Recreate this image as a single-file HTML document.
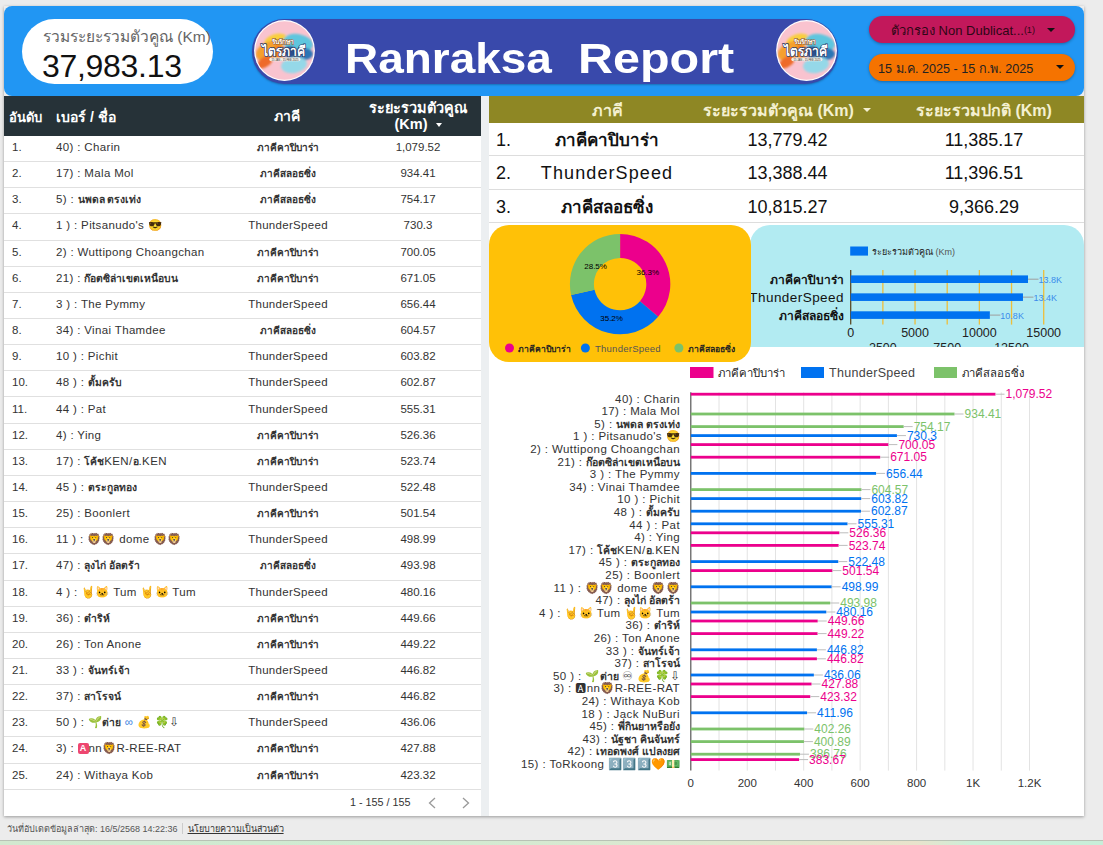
<!DOCTYPE html>
<html><head><meta charset="utf-8">
<style>
*{margin:0;padding:0;box-sizing:border-box}
html,body{width:1103px;height:845px;overflow:hidden;background:#ececec;font-family:"Liberation Sans", sans-serif;}
.abs{position:absolute}
#hdr{position:absolute;left:4px;top:6px;width:1080px;height:90px;background:#2196F3;border-radius:8px}
#cvbg{position:absolute;left:4px;top:6px;width:1080px;height:90px;background:#ececec}
#pill{position:absolute;left:22px;top:19px;width:191px;height:65px;background:#fff;border-radius:33px}
#pill .lab{position:absolute;left:21px;top:5px;font-size:15.5px;color:#666;white-space:nowrap}
#pill .val{position:absolute;left:20px;top:29px;font-size:32px;color:#111;white-space:nowrap;letter-spacing:-0.3px}
#banner{position:absolute;left:251.6px;top:19px;width:586.4px;height:65px;background:#3949AB;border-radius:32.5px;box-shadow:0 1px 2px rgba(0,0,0,.25)}
.title{position:absolute;top:34px;font-size:43px;font-weight:bold;color:#fff;white-space:nowrap;transform-origin:0 0}
.logo{position:absolute;width:64px;height:64px;border-radius:50%;background:#3949AB;box-shadow:0 1px 3px rgba(0,0,0,.35)}
.logo .in{position:absolute;left:3px;top:3px;width:58px;height:58px;border-radius:50%;background:#f9c6d0;overflow:hidden}
.fpill{position:absolute;left:869px;width:206px;height:27px;border-radius:14px;box-shadow:0 1px 3px rgba(0,0,0,.3);white-space:nowrap}
.fpill .t{position:absolute;top:6px;font-size:13px;color:#222}
.caret{position:absolute;width:0;height:0;border-left:4px solid transparent;border-right:4px solid transparent;border-top:4px solid #111}
#canvas{position:absolute;left:4px;top:6px;width:1080px;height:810px;background:#fff;box-shadow:0 1px 3px rgba(0,0,0,.35)}
#left{position:absolute;left:4px;top:96px;width:477px;height:720px;background:#fff}
#lhead{position:absolute;left:4px;top:96px;width:477px;height:40px;background:#263238;color:#fff;font-weight:bold}
.tr{position:absolute;left:4px;width:477px;height:26.15px;border-bottom:1px solid #e0e0e0;font-size:11.5px;color:#333;white-space:nowrap}
.tr span{position:absolute;top:0;line-height:23px}
.c1{left:8px} .c2{left:52px;letter-spacing:0.35px} .c2 b{letter-spacing:0;font-size:10.3px} .c3{left:284px;width:0;display:flex;justify-content:center} .c4{left:414px;width:0;display:flex;justify-content:center}
.th{font-weight:bold;font-size:10px} .ea{display:inline-block;font-style:normal;background:#ee4670;color:#fff;font-size:9px;line-height:11px;width:11px;text-align:center;border-radius:2px;vertical-align:1px;font-weight:bold;letter-spacing:0} .c3{letter-spacing:0.3px} .c3.th{letter-spacing:0}
#gap{position:absolute;left:481px;top:96px;width:8px;height:720px;background:#eceff1}
#right{position:absolute;left:489px;top:96px;width:595px;height:720px;background:#fff}
#rhead{position:absolute;left:489px;top:96px;width:595px;height:27px;background:#8E8724;color:#f4f0d0;font-weight:bold;font-size:16px}
.rr{position:absolute;left:489px;width:595px;height:33.3px;border-bottom:1px solid #ddd;font-size:18px;color:#111;white-space:nowrap}
.rr span{position:absolute;top:0;line-height:35px} .rr .cc{width:0;display:flex;justify-content:center}
#yellow{position:absolute;left:489px;top:225px;width:262px;height:137px;background:#FFC107;border-radius:20px}
#cyan{position:absolute;left:750px;top:225px;width:334px;height:122px;background:#B2EBF2;border-radius:20px 20px 0 0;overflow:hidden}
#foot{position:absolute;left:7px;top:823px;font-size:9px;line-height:12px;color:#555;white-space:nowrap}
#strip{position:absolute;left:0;top:840px;width:1103px;height:5px;background:linear-gradient(90deg,#d2e8cf 0%,#cfebd2 35%,#dbe8d0 60%,#e9e3cc 83%,#cdeed8 88%,#c8eed9 100%);border-top:1px solid #b9c2b5}
svg text{font-family:"Liberation Sans", sans-serif}
</style></head><body>
<div id="canvas"></div><div id="cvbg"></div><div id="hdr"></div>
<div id="pill"><div class="lab">รวมระยะรวมตัวคูณ (Km)</div><div class="val">37,983.13</div></div>
<div id="banner"></div>
<svg class="abs" style="left:252.0px;top:18.3px" width="65" height="65" viewBox="0 0 65 65">
<defs><clipPath id="c284"><circle cx="32.5" cy="32.5" r="29.2"/></clipPath>
<filter id="f284" x="-20%" y="-20%" width="140%" height="140%"><feGaussianBlur stdDeviation="0.8"/></filter></defs>
<circle cx="32.5" cy="32.5" r="30.4" fill="#fff"/>
<circle cx="32.5" cy="32.5" r="29.2" fill="#F9C3CF"/>
<g clip-path="url(#c284)"><g filter="url(#f284)">
<ellipse cx="24" cy="23" rx="12" ry="7" fill="#F9CF3C" transform="rotate(-15 24 23)"/>
<ellipse cx="17" cy="33" rx="14" ry="9" fill="#F5A02E" transform="rotate(-25 17 33)"/>
<ellipse cx="13" cy="44" rx="9" ry="5" fill="#EE6A2A" transform="rotate(-35 13 44)"/>
<ellipse cx="27" cy="34" rx="7" ry="7" fill="#F07F22"/>
<ellipse cx="46" cy="25" rx="15" ry="9" fill="#5EC6DE" transform="rotate(10 46 25)"/>
<ellipse cx="52" cy="36" rx="9" ry="6" fill="#2B75B5"/>
<ellipse cx="42" cy="47" rx="13" ry="8" fill="#95D8E8" transform="rotate(-10 42 47)"/>
<ellipse cx="38" cy="34" rx="7" ry="6" fill="#2A4F8E"/>
</g></g>
<text x="31" y="26" text-anchor="middle" font-size="6.5" font-weight="bold" fill="#fff" stroke="#8a4a10" stroke-width="1" paint-order="stroke">รันรักษา</text>
<text x="31.5" y="38.2" text-anchor="middle" font-size="13.5" font-weight="bold" fill="#fff" stroke="#23345e" stroke-width="1.4" paint-order="stroke" textLength="44" lengthAdjust="spacingAndGlyphs">ไตรภาคี</text>
<rect x="17.3" y="39.6" width="31.2" height="3.6" rx="1.8" fill="#f2ede6"/>
<text x="32.9" y="42.5" text-anchor="middle" font-size="3" fill="#333" textLength="27" lengthAdjust="spacingAndGlyphs">15 JAN - 15 FEB 2025</text>
</svg>
<svg class="abs" style="left:774.0px;top:17.7px" width="65" height="65" viewBox="0 0 65 65">
<defs><clipPath id="c806"><circle cx="32.5" cy="32.5" r="29.2"/></clipPath>
<filter id="f806" x="-20%" y="-20%" width="140%" height="140%"><feGaussianBlur stdDeviation="0.8"/></filter></defs>
<circle cx="32.5" cy="32.5" r="30.4" fill="#fff"/>
<circle cx="32.5" cy="32.5" r="29.2" fill="#F9C3CF"/>
<g clip-path="url(#c806)"><g filter="url(#f806)">
<ellipse cx="24" cy="23" rx="12" ry="7" fill="#F9CF3C" transform="rotate(-15 24 23)"/>
<ellipse cx="17" cy="33" rx="14" ry="9" fill="#F5A02E" transform="rotate(-25 17 33)"/>
<ellipse cx="13" cy="44" rx="9" ry="5" fill="#EE6A2A" transform="rotate(-35 13 44)"/>
<ellipse cx="27" cy="34" rx="7" ry="7" fill="#F07F22"/>
<ellipse cx="46" cy="25" rx="15" ry="9" fill="#5EC6DE" transform="rotate(10 46 25)"/>
<ellipse cx="52" cy="36" rx="9" ry="6" fill="#2B75B5"/>
<ellipse cx="42" cy="47" rx="13" ry="8" fill="#95D8E8" transform="rotate(-10 42 47)"/>
<ellipse cx="38" cy="34" rx="7" ry="6" fill="#2A4F8E"/>
</g></g>
<text x="31" y="26" text-anchor="middle" font-size="6.5" font-weight="bold" fill="#fff" stroke="#8a4a10" stroke-width="1" paint-order="stroke">รันรักษา</text>
<text x="31.5" y="38.2" text-anchor="middle" font-size="13.5" font-weight="bold" fill="#fff" stroke="#23345e" stroke-width="1.4" paint-order="stroke" textLength="44" lengthAdjust="spacingAndGlyphs">ไตรภาคี</text>
<rect x="17.3" y="39.6" width="31.2" height="3.6" rx="1.8" fill="#f2ede6"/>
<text x="32.9" y="42.5" text-anchor="middle" font-size="3" fill="#333" textLength="27" lengthAdjust="spacingAndGlyphs">15 JAN - 15 FEB 2025</text>
</svg>
<div class="title" style="left:344.6px;transform:scaleX(1.068)">Ranraksa</div>
<div class="title" style="left:577.6px;transform:scaleX(1.127)">Report</div>
<div class="fpill" style="top:16px;background:#C2185B"><span class="t" style="left:22px;top:4px;color:#2e0716">ตัวกรอง Non Dublicat...<span style="font-size:9px;vertical-align:2px">(1)</span></span><div class="caret" style="left:178px;top:12px"></div></div>
<div class="fpill" style="top:54px;background:#F57300"><span class="t" style="left:9px;top:4.5px;font-size:12.6px">15 ม.ค. 2025 - 15 ก.พ. 2025</span><div class="caret" style="left:187px;top:11px"></div></div>

<div id="left"></div>
<div id="lhead">
 <span class="abs" style="left:5px;top:11px;font-size:13px">อันดับ</span>
 <span class="abs" style="left:52px;top:10px;font-size:14px">เบอร์ / ชื่อ</span>
 <span class="abs" style="left:270px;top:9px;font-size:14px">ภาคี</span>
 <span class="abs" style="left:359px;top:4px;font-size:14.5px;text-align:center;width:110px;line-height:16px">ระยะรวมตัวคูณ<br>(Km) <span style="display:inline-block;width:0;height:0;border-left:3.5px solid transparent;border-right:3.5px solid transparent;border-top:4px solid #fff;vertical-align:2px;margin-left:4px"></span></span>
</div>
<div class="tr" style="top:136.00px"><span class="c1">1.</span><span class="c2">40) : Charin</span><span class="c3 th">ภาคีคาปิบาร่า</span><span class="c4">1,079.52</span></div>
<div class="tr" style="top:162.15px"><span class="c1">2.</span><span class="c2">17) : Mala Mol</span><span class="c3 th">ภาคีสลอธซิ่ง</span><span class="c4">934.41</span></div>
<div class="tr" style="top:188.30px"><span class="c1">3.</span><span class="c2">5) : <b>นพดล ตรงเท่ง</b></span><span class="c3 th">ภาคีสลอธซิ่ง</span><span class="c4">754.17</span></div>
<div class="tr" style="top:214.45px"><span class="c1">4.</span><span class="c2">1 ) : Pitsanudo&#39;s 😎</span><span class="c3">ThunderSpeed</span><span class="c4">730.3</span></div>
<div class="tr" style="top:240.60px"><span class="c1">5.</span><span class="c2">2) : Wuttipong Choangchan</span><span class="c3 th">ภาคีคาปิบาร่า</span><span class="c4">700.05</span></div>
<div class="tr" style="top:266.75px"><span class="c1">6.</span><span class="c2">21) : <b>ก๊อตซิล่าเขตเหนือบน</b></span><span class="c3 th">ภาคีคาปิบาร่า</span><span class="c4">671.05</span></div>
<div class="tr" style="top:292.90px"><span class="c1">7.</span><span class="c2">3 ) : The Pymmy</span><span class="c3">ThunderSpeed</span><span class="c4">656.44</span></div>
<div class="tr" style="top:319.05px"><span class="c1">8.</span><span class="c2">34) : Vinai Thamdee</span><span class="c3 th">ภาคีสลอธซิ่ง</span><span class="c4">604.57</span></div>
<div class="tr" style="top:345.20px"><span class="c1">9.</span><span class="c2">10 ) : Pichit</span><span class="c3">ThunderSpeed</span><span class="c4">603.82</span></div>
<div class="tr" style="top:371.35px"><span class="c1">10.</span><span class="c2">48 ) : <b>ตั้มครับ</b></span><span class="c3">ThunderSpeed</span><span class="c4">602.87</span></div>
<div class="tr" style="top:397.50px"><span class="c1">11.</span><span class="c2">44 ) : Pat</span><span class="c3">ThunderSpeed</span><span class="c4">555.31</span></div>
<div class="tr" style="top:423.65px"><span class="c1">12.</span><span class="c2">4) : Ying</span><span class="c3 th">ภาคีคาปิบาร่า</span><span class="c4">526.36</span></div>
<div class="tr" style="top:449.80px"><span class="c1">13.</span><span class="c2">17) : <b>โค้ช</b>KEN/<b>อ</b>.KEN</span><span class="c3 th">ภาคีคาปิบาร่า</span><span class="c4">523.74</span></div>
<div class="tr" style="top:475.95px"><span class="c1">14.</span><span class="c2">45 ) : <b>ตระกูลทอง</b></span><span class="c3">ThunderSpeed</span><span class="c4">522.48</span></div>
<div class="tr" style="top:502.10px"><span class="c1">15.</span><span class="c2">25) : Boonlert</span><span class="c3 th">ภาคีคาปิบาร่า</span><span class="c4">501.54</span></div>
<div class="tr" style="top:528.25px"><span class="c1">16.</span><span class="c2">11 ) : 🦁🦁 dome 🦁🦁</span><span class="c3">ThunderSpeed</span><span class="c4">498.99</span></div>
<div class="tr" style="top:554.40px"><span class="c1">17.</span><span class="c2">47) : <b>ลุงไก่ อัลตร้า</b></span><span class="c3 th">ภาคีสลอธซิ่ง</span><span class="c4">493.98</span></div>
<div class="tr" style="top:580.55px"><span class="c1">18.</span><span class="c2">4 ) : 🤘🐱 Tum 🤘🐱 Tum</span><span class="c3">ThunderSpeed</span><span class="c4">480.16</span></div>
<div class="tr" style="top:606.70px"><span class="c1">19.</span><span class="c2">36) : <b>ต๋าริห์</b></span><span class="c3 th">ภาคีคาปิบาร่า</span><span class="c4">449.66</span></div>
<div class="tr" style="top:632.85px"><span class="c1">20.</span><span class="c2">26) : Ton Anone</span><span class="c3 th">ภาคีคาปิบาร่า</span><span class="c4">449.22</span></div>
<div class="tr" style="top:659.00px"><span class="c1">21.</span><span class="c2">33 ) : <b>จันทร์เจ้า</b></span><span class="c3">ThunderSpeed</span><span class="c4">446.82</span></div>
<div class="tr" style="top:685.15px"><span class="c1">22.</span><span class="c2">37) : <b>สาโรจน์</b></span><span class="c3 th">ภาคีคาปิบาร่า</span><span class="c4">446.82</span></div>
<div class="tr" style="top:711.30px"><span class="c1">23.</span><span class="c2">50 ) : 🌱<b>ต่าย</b> <i style="font-style:normal;color:#3b82e0">∞</i> 💰 🍀⇩</span><span class="c3">ThunderSpeed</span><span class="c4">436.06</span></div>
<div class="tr" style="top:737.45px"><span class="c1">24.</span><span class="c2">3) : <i class="ea">A</i>nn🦁R-REE-RAT</span><span class="c3 th">ภาคีคาปิบาร่า</span><span class="c4">427.88</span></div>
<div class="tr" style="top:763.60px"><span class="c1">25.</span><span class="c2">24) : Withaya Kob</span><span class="c3 th">ภาคีคาปิบาร่า</span><span class="c4">423.32</span></div>
<div class="abs" style="left:350px;top:796px;font-size:10.8px;color:#333">1 - 155 / 155</div>
<svg class="abs" style="left:420px;top:790px" width="60" height="26"><path d="M15,8 L9.5,13 L15,18" stroke="#999" stroke-width="1.3" fill="none"/><path d="M43,8 L48.5,13 L43,18" stroke="#999" stroke-width="1.3" fill="none"/></svg>
<div id="gap"></div>
<div id="right"></div>
<div id="rhead">
 <span class="abs" style="left:103px;top:2px">ภาคี</span>
 <span class="abs" style="left:214px;top:2px">ระยะรวมตัวคูณ (Km) <span style="display:inline-block;width:0;height:0;border-left:4px solid transparent;border-right:4px solid transparent;border-top:4.5px solid #f4f0d0;vertical-align:4px;margin-left:5px"></span></span>
 <span class="abs" style="left:427px;top:2px">ระยะรวมปกติ (Km)</span>
</div>
<div class="rr" style="top:123px"><span style="left:7px">1.</span><span class="cc" style="left:118px;font-weight:bold;font-size:17px">ภาคีคาปิบาร่า</span><span class="cc" style="left:298.5px">13,779.42</span><span class="cc" style="left:495px">11,385.17</span></div>
<div class="rr" style="top:156.3px"><span style="left:7px">2.</span><span class="cc" style="left:118px;letter-spacing:1.1px">ThunderSpeed</span><span class="cc" style="left:298.5px">13,388.44</span><span class="cc" style="left:495px">11,396.51</span></div>
<div class="rr" style="top:189.6px"><span style="left:7px">3.</span><span class="cc" style="left:118px;font-weight:bold;font-size:17px">ภาคีสลอธซิ่ง</span><span class="cc" style="left:298.5px">10,815.27</span><span class="cc" style="left:495px">9,366.29</span></div>

<div id="cyan"></div>
<svg class="abs" style="left:700px;top:225px" width="384" height="122" viewBox="700 225 384 122">
<rect x="850.2" y="246.5" width="17.8" height="9.1" fill="#0072F0"/>
<text x="872" y="254.5" font-size="9" fill="#222">ระยะรวมตัวคูณ <tspan fill="#555">(Km)</tspan></text>
<line x1="882.87" y1="270" x2="882.87" y2="324.6" stroke="#EDBE3A" stroke-width="1.3"/>
<line x1="915.04" y1="270" x2="915.04" y2="324.6" stroke="#EDBE3A" stroke-width="1.3"/>
<line x1="947.20" y1="270" x2="947.20" y2="324.6" stroke="#EDBE3A" stroke-width="1.3"/>
<line x1="979.37" y1="270" x2="979.37" y2="324.6" stroke="#EDBE3A" stroke-width="1.3"/>
<line x1="1011.54" y1="270" x2="1011.54" y2="324.6" stroke="#EDBE3A" stroke-width="1.3"/>
<line x1="1043.71" y1="270" x2="1043.71" y2="324.6" stroke="#EDBE3A" stroke-width="1.3"/>
<line x1="850.7" y1="270" x2="850.7" y2="324.6" stroke="#5a4a25" stroke-width="1.3"/>
<rect x="850.7" y="275.40" width="177.30" height="7.6" fill="#0072F0"/>
<line x1="1028.00" y1="279.20" x2="1038.50" y2="279.20" stroke="#9e9e9e" stroke-width="1"/>
<text x="1038.50" y="282.60" font-size="9" fill="#3B8BEB">13.8K</text>
<text x="844" y="283.90" text-anchor="end" fill="#111" font-weight="bold" font-size="12">ภาคีคาปิบาร่า</text>
<rect x="850.7" y="293.35" width="172.27" height="7.6" fill="#0072F0"/>
<line x1="1022.97" y1="297.15" x2="1033.47" y2="297.15" stroke="#9e9e9e" stroke-width="1"/>
<text x="1033.47" y="300.55" font-size="9" fill="#3B8BEB">13.4K</text>
<text x="844" y="301.85" text-anchor="end" fill="#111" font-size="13.5" letter-spacing="0.45">ThunderSpeed</text>
<rect x="850.7" y="311.30" width="139.16" height="7.6" fill="#0072F0"/>
<line x1="989.86" y1="315.10" x2="1000.36" y2="315.10" stroke="#9e9e9e" stroke-width="1"/>
<text x="1000.36" y="318.50" font-size="9" fill="#3B8BEB">10.8K</text>
<text x="844" y="319.80" text-anchor="end" fill="#111" font-weight="bold" font-size="12">ภาคีสลอธซิ่ง</text>
<text x="850.70" y="337.2" text-anchor="middle" font-size="12.5" fill="#222">0</text>
<text x="915.04" y="337.2" text-anchor="middle" font-size="12.5" fill="#222">5000</text>
<text x="979.37" y="337.2" text-anchor="middle" font-size="12.5" fill="#222">10000</text>
<text x="1043.71" y="337.2" text-anchor="middle" font-size="12.5" fill="#222">15000</text>
<text x="882.87" y="351.5" text-anchor="middle" font-size="12.5" fill="#222">2500</text>
<text x="947.20" y="351.5" text-anchor="middle" font-size="12.5" fill="#222">7500</text>
<text x="1011.54" y="351.5" text-anchor="middle" font-size="12.5" fill="#222">12500</text>
</svg>
<div id="yellow"></div>
<svg class="abs" style="left:0;top:0" width="1103" height="845" viewBox="0 0 1103 845">
<path d="M620.10,233.90 A50.2,50.2 0 0 1 658.17,316.82 L639.97,301.18 A26.2,26.2 0 0 0 620.10,257.90 Z" fill="#EC008C"/>
<path d="M658.17,316.82 A50.2,50.2 0 0 1 571.11,295.05 L594.53,289.82 A26.2,26.2 0 0 0 639.97,301.18 Z" fill="#0072F0"/>
<path d="M571.11,295.05 A50.2,50.2 0 0 1 620.10,233.90 L620.10,257.90 A26.2,26.2 0 0 0 594.53,289.82 Z" fill="#7CC26A"/>
<text x="595.6" y="268.5" text-anchor="middle" font-size="8" fill="#000">28.5%</text>
<text x="647.8" y="274.5" text-anchor="middle" font-size="8" fill="#000">36.3%</text>
<text x="611.6" y="321" text-anchor="middle" font-size="8" fill="#000">35.2%</text>
<circle cx="509.5" cy="348" r="4.5" fill="#EC008C"/><text x="518" y="351.5" font-size="8.6" font-weight="bold" fill="#222">ภาคีคาปิบาร่า</text>
<circle cx="585.4" cy="348" r="4.5" fill="#0072F0"/><text x="595" y="351.5" font-size="9.5" letter-spacing="0.25" fill="#555">ThunderSpeed</text>
<circle cx="678.9" cy="348" r="4.5" fill="#7CC26A"/><text x="688" y="351.5" font-size="8.6" font-weight="bold" fill="#222">ภาคีสลอธซิ่ง</text>
<line x1="719.02" y1="392.3" x2="719.02" y2="770.6" stroke="#e3e3e3" stroke-width="1"/>
<line x1="747.25" y1="392.3" x2="747.25" y2="770.6" stroke="#e3e3e3" stroke-width="1"/>
<line x1="775.47" y1="392.3" x2="775.47" y2="770.6" stroke="#e3e3e3" stroke-width="1"/>
<line x1="803.70" y1="392.3" x2="803.70" y2="770.6" stroke="#e3e3e3" stroke-width="1"/>
<line x1="831.92" y1="392.3" x2="831.92" y2="770.6" stroke="#e3e3e3" stroke-width="1"/>
<line x1="860.15" y1="392.3" x2="860.15" y2="770.6" stroke="#e3e3e3" stroke-width="1"/>
<line x1="888.38" y1="392.3" x2="888.38" y2="770.6" stroke="#e3e3e3" stroke-width="1"/>
<line x1="916.60" y1="392.3" x2="916.60" y2="770.6" stroke="#e3e3e3" stroke-width="1"/>
<line x1="944.82" y1="392.3" x2="944.82" y2="770.6" stroke="#e3e3e3" stroke-width="1"/>
<line x1="973.05" y1="392.3" x2="973.05" y2="770.6" stroke="#e3e3e3" stroke-width="1"/>
<line x1="1001.27" y1="392.3" x2="1001.27" y2="770.6" stroke="#e3e3e3" stroke-width="1"/>
<line x1="1029.50" y1="392.3" x2="1029.50" y2="770.6" stroke="#e3e3e3" stroke-width="1"/>
<line x1="690.8" y1="392.3" x2="690.8" y2="770.6" stroke="#555" stroke-width="1.2"/>
<rect x="690.8" y="392.80" width="304.69" height="2.8" fill="#EC008C"/>
<line x1="995.49" y1="394.20" x2="1004.49" y2="394.20" stroke="#bdbdbd" stroke-width="1"/>
<text x="1005.49" y="398.40" fill="#EC008C" font-size="12">1,079.52</text>
<text x="680" y="402.60" text-anchor="end" fill="#333" font-size="11.5" letter-spacing="0.4">40) : Charin</text>
<rect x="690.8" y="412.60" width="263.74" height="2.8" fill="#7CC26A"/>
<line x1="954.54" y1="414.00" x2="963.54" y2="414.00" stroke="#bdbdbd" stroke-width="1"/>
<text x="964.54" y="418.20" fill="#7CC26A" font-size="12">934.41</text>
<text x="680" y="415.20" text-anchor="end" fill="#333" font-size="11.5" letter-spacing="0.4">17) : Mala Mol</text>
<rect x="690.8" y="425.20" width="212.86" height="2.8" fill="#7CC26A"/>
<line x1="903.66" y1="426.60" x2="912.66" y2="426.60" stroke="#bdbdbd" stroke-width="1"/>
<text x="913.66" y="430.80" fill="#7CC26A" font-size="12">754.17</text>
<text x="680" y="427.80" text-anchor="end" fill="#333" font-size="11.5" letter-spacing="0.4">5) : <tspan font-weight="bold" font-size="10.5" letter-spacing="0">นพดล ตรงเท่ง</tspan></text>
<rect x="690.8" y="434.20" width="206.13" height="2.8" fill="#0072F0"/>
<line x1="896.93" y1="435.60" x2="905.93" y2="435.60" stroke="#bdbdbd" stroke-width="1"/>
<text x="906.93" y="439.80" fill="#0072F0" font-size="12">730.3</text>
<text x="680" y="440.40" text-anchor="end" fill="#333" font-size="11.5" letter-spacing="0.4">1 ) : Pitsanudo&#39;s 😎</text>
<rect x="690.8" y="443.20" width="197.59" height="2.8" fill="#EC008C"/>
<line x1="888.39" y1="444.60" x2="897.39" y2="444.60" stroke="#bdbdbd" stroke-width="1"/>
<text x="898.39" y="448.80" fill="#EC008C" font-size="12">700.05</text>
<text x="680" y="453.00" text-anchor="end" fill="#333" font-size="11.5" letter-spacing="0.4">2) : Wuttipong Choangchan</text>
<rect x="690.8" y="455.80" width="189.40" height="2.8" fill="#EC008C"/>
<line x1="880.20" y1="457.20" x2="889.20" y2="457.20" stroke="#bdbdbd" stroke-width="1"/>
<text x="890.20" y="461.40" fill="#EC008C" font-size="12">671.05</text>
<text x="680" y="465.60" text-anchor="end" fill="#333" font-size="11.5" letter-spacing="0.4">21) : <tspan font-weight="bold" font-size="10.5" letter-spacing="0">ก๊อตซิล่าเขตเหนือบน</tspan></text>
<rect x="690.8" y="472.00" width="185.28" height="2.8" fill="#0072F0"/>
<line x1="876.08" y1="473.40" x2="885.08" y2="473.40" stroke="#bdbdbd" stroke-width="1"/>
<text x="886.08" y="477.60" fill="#0072F0" font-size="12">656.44</text>
<text x="680" y="478.20" text-anchor="end" fill="#333" font-size="11.5" letter-spacing="0.4">3 ) : The Pymmy</text>
<rect x="690.8" y="488.20" width="170.64" height="2.8" fill="#7CC26A"/>
<line x1="861.44" y1="489.60" x2="870.44" y2="489.60" stroke="#bdbdbd" stroke-width="1"/>
<text x="871.44" y="493.80" fill="#7CC26A" font-size="12">604.57</text>
<text x="680" y="490.80" text-anchor="end" fill="#333" font-size="11.5" letter-spacing="0.4">34) : Vinai Thamdee</text>
<rect x="690.8" y="497.20" width="170.43" height="2.8" fill="#0072F0"/>
<line x1="861.23" y1="498.60" x2="870.23" y2="498.60" stroke="#bdbdbd" stroke-width="1"/>
<text x="871.23" y="502.80" fill="#0072F0" font-size="12">603.82</text>
<text x="680" y="503.40" text-anchor="end" fill="#333" font-size="11.5" letter-spacing="0.4">10 ) : Pichit</text>
<rect x="690.8" y="509.80" width="170.16" height="2.8" fill="#0072F0"/>
<line x1="860.96" y1="511.20" x2="869.96" y2="511.20" stroke="#bdbdbd" stroke-width="1"/>
<text x="870.96" y="515.40" fill="#0072F0" font-size="12">602.87</text>
<text x="680" y="516.00" text-anchor="end" fill="#333" font-size="11.5" letter-spacing="0.4">48 ) : <tspan font-weight="bold" font-size="10.5" letter-spacing="0">ตั้มครับ</tspan></text>
<rect x="690.8" y="522.40" width="156.74" height="2.8" fill="#0072F0"/>
<line x1="847.54" y1="523.80" x2="856.54" y2="523.80" stroke="#bdbdbd" stroke-width="1"/>
<text x="857.54" y="528.00" fill="#0072F0" font-size="12">555.31</text>
<text x="680" y="528.60" text-anchor="end" fill="#333" font-size="11.5" letter-spacing="0.4">44 ) : Pat</text>
<rect x="690.8" y="531.40" width="148.57" height="2.8" fill="#EC008C"/>
<line x1="839.37" y1="532.80" x2="848.37" y2="532.80" stroke="#bdbdbd" stroke-width="1"/>
<text x="849.37" y="537.00" fill="#EC008C" font-size="12">526.36</text>
<text x="680" y="541.20" text-anchor="end" fill="#333" font-size="11.5" letter-spacing="0.4">4) : Ying</text>
<rect x="690.8" y="544.00" width="147.83" height="2.8" fill="#EC008C"/>
<line x1="838.63" y1="545.40" x2="847.63" y2="545.40" stroke="#bdbdbd" stroke-width="1"/>
<text x="848.63" y="549.60" fill="#EC008C" font-size="12">523.74</text>
<text x="680" y="553.80" text-anchor="end" fill="#333" font-size="11.5" letter-spacing="0.4">17) : <tspan font-weight="bold" font-size="10.5" letter-spacing="0">โค้ช</tspan>KEN/<tspan font-weight="bold" font-size="10.5" letter-spacing="0">อ</tspan>.KEN</text>
<rect x="690.8" y="560.20" width="147.47" height="2.8" fill="#0072F0"/>
<line x1="838.27" y1="561.60" x2="847.27" y2="561.60" stroke="#bdbdbd" stroke-width="1"/>
<text x="848.27" y="565.80" fill="#0072F0" font-size="12">522.48</text>
<text x="680" y="566.40" text-anchor="end" fill="#333" font-size="11.5" letter-spacing="0.4">45 ) : <tspan font-weight="bold" font-size="10.5" letter-spacing="0">ตระกูลทอง</tspan></text>
<rect x="690.8" y="569.20" width="141.56" height="2.8" fill="#EC008C"/>
<line x1="832.36" y1="570.60" x2="841.36" y2="570.60" stroke="#bdbdbd" stroke-width="1"/>
<text x="842.36" y="574.80" fill="#EC008C" font-size="12">501.54</text>
<text x="680" y="579.00" text-anchor="end" fill="#333" font-size="11.5" letter-spacing="0.4">25) : Boonlert</text>
<rect x="690.8" y="585.40" width="140.84" height="2.8" fill="#0072F0"/>
<line x1="831.64" y1="586.80" x2="840.64" y2="586.80" stroke="#bdbdbd" stroke-width="1"/>
<text x="841.64" y="591.00" fill="#0072F0" font-size="12">498.99</text>
<text x="680" y="591.60" text-anchor="end" fill="#333" font-size="11.5" letter-spacing="0.4">11 ) : 🦁🦁 dome 🦁🦁</text>
<rect x="690.8" y="601.60" width="139.43" height="2.8" fill="#7CC26A"/>
<line x1="830.23" y1="603.00" x2="839.23" y2="603.00" stroke="#bdbdbd" stroke-width="1"/>
<text x="840.23" y="607.20" fill="#7CC26A" font-size="12">493.98</text>
<text x="680" y="604.20" text-anchor="end" fill="#333" font-size="11.5" letter-spacing="0.4">47) : <tspan font-weight="bold" font-size="10.5" letter-spacing="0">ลุงไก่ อัลตร้า</tspan></text>
<rect x="690.8" y="610.60" width="135.53" height="2.8" fill="#0072F0"/>
<line x1="826.33" y1="612.00" x2="835.33" y2="612.00" stroke="#bdbdbd" stroke-width="1"/>
<text x="836.33" y="616.20" fill="#0072F0" font-size="12">480.16</text>
<text x="680" y="616.80" text-anchor="end" fill="#333" font-size="11.5" letter-spacing="0.4">4 ) : 🤘🐱 Tum 🤘🐱 Tum</text>
<rect x="690.8" y="619.60" width="126.92" height="2.8" fill="#EC008C"/>
<line x1="817.72" y1="621.00" x2="826.72" y2="621.00" stroke="#bdbdbd" stroke-width="1"/>
<text x="827.72" y="625.20" fill="#EC008C" font-size="12">449.66</text>
<text x="680" y="629.40" text-anchor="end" fill="#333" font-size="11.5" letter-spacing="0.4">36) : <tspan font-weight="bold" font-size="10.5" letter-spacing="0">ต๋าริห์</tspan></text>
<rect x="690.8" y="632.20" width="126.79" height="2.8" fill="#EC008C"/>
<line x1="817.59" y1="633.60" x2="826.59" y2="633.60" stroke="#bdbdbd" stroke-width="1"/>
<text x="827.59" y="637.80" fill="#EC008C" font-size="12">449.22</text>
<text x="680" y="642.00" text-anchor="end" fill="#333" font-size="11.5" letter-spacing="0.4">26) : Ton Anone</text>
<rect x="690.8" y="648.40" width="126.11" height="2.8" fill="#0072F0"/>
<line x1="816.91" y1="649.80" x2="825.91" y2="649.80" stroke="#bdbdbd" stroke-width="1"/>
<text x="826.91" y="654.00" fill="#0072F0" font-size="12">446.82</text>
<text x="680" y="654.60" text-anchor="end" fill="#333" font-size="11.5" letter-spacing="0.4">33 ) : <tspan font-weight="bold" font-size="10.5" letter-spacing="0">จันทร์เจ้า</tspan></text>
<rect x="690.8" y="657.40" width="126.11" height="2.8" fill="#EC008C"/>
<line x1="816.91" y1="658.80" x2="825.91" y2="658.80" stroke="#bdbdbd" stroke-width="1"/>
<text x="826.91" y="663.00" fill="#EC008C" font-size="12">446.82</text>
<text x="680" y="667.20" text-anchor="end" fill="#333" font-size="11.5" letter-spacing="0.4">37) : <tspan font-weight="bold" font-size="10.5" letter-spacing="0">สาโรจน์</tspan></text>
<rect x="690.8" y="673.60" width="123.08" height="2.8" fill="#0072F0"/>
<line x1="813.88" y1="675.00" x2="822.88" y2="675.00" stroke="#bdbdbd" stroke-width="1"/>
<text x="823.88" y="679.20" fill="#0072F0" font-size="12">436.06</text>
<text x="680" y="679.80" text-anchor="end" fill="#333" font-size="11.5" letter-spacing="0.4">50 ) : 🌱<tspan font-weight="bold" font-size="10.5" letter-spacing="0">ต่าย</tspan> ♾ 💰 🍀⇩</text>
<rect x="690.8" y="682.60" width="120.77" height="2.8" fill="#EC008C"/>
<line x1="811.57" y1="684.00" x2="820.57" y2="684.00" stroke="#bdbdbd" stroke-width="1"/>
<text x="821.57" y="688.20" fill="#EC008C" font-size="12">427.88</text>
<text x="680" y="692.40" text-anchor="end" fill="#333" font-size="11.5" letter-spacing="0.4">3) : 🅰nn🦁R-REE-RAT</text>
<rect x="690.8" y="695.20" width="119.48" height="2.8" fill="#EC008C"/>
<line x1="810.28" y1="696.60" x2="819.28" y2="696.60" stroke="#bdbdbd" stroke-width="1"/>
<text x="820.28" y="700.80" fill="#EC008C" font-size="12">423.32</text>
<text x="680" y="705.00" text-anchor="end" fill="#333" font-size="11.5" letter-spacing="0.4">24) : Withaya Kob</text>
<rect x="690.8" y="711.40" width="116.28" height="2.8" fill="#0072F0"/>
<line x1="807.08" y1="712.80" x2="816.08" y2="712.80" stroke="#bdbdbd" stroke-width="1"/>
<text x="817.08" y="717.00" fill="#0072F0" font-size="12">411.96</text>
<text x="680" y="717.60" text-anchor="end" fill="#333" font-size="11.5" letter-spacing="0.4">18 ) : Jack NuBuri</text>
<rect x="690.8" y="727.60" width="113.54" height="2.8" fill="#7CC26A"/>
<line x1="804.34" y1="729.00" x2="813.34" y2="729.00" stroke="#bdbdbd" stroke-width="1"/>
<text x="814.34" y="733.20" fill="#7CC26A" font-size="12">402.26</text>
<text x="680" y="730.20" text-anchor="end" fill="#333" font-size="11.5" letter-spacing="0.4">45) : <tspan font-weight="bold" font-size="10.5" letter-spacing="0">พี่กินยาหรือยัง</tspan></text>
<rect x="690.8" y="740.20" width="113.15" height="2.8" fill="#7CC26A"/>
<line x1="803.95" y1="741.60" x2="812.95" y2="741.60" stroke="#bdbdbd" stroke-width="1"/>
<text x="813.95" y="745.80" fill="#7CC26A" font-size="12">400.89</text>
<text x="680" y="742.80" text-anchor="end" fill="#333" font-size="11.5" letter-spacing="0.4">43) : <tspan font-weight="bold" font-size="10.5" letter-spacing="0">นัฐชา คินจันทร์</tspan></text>
<rect x="690.8" y="752.80" width="109.16" height="2.8" fill="#7CC26A"/>
<line x1="799.96" y1="754.20" x2="808.96" y2="754.20" stroke="#bdbdbd" stroke-width="1"/>
<text x="809.96" y="758.40" fill="#7CC26A" font-size="12">386.76</text>
<text x="680" y="755.40" text-anchor="end" fill="#333" font-size="11.5" letter-spacing="0.4">42) : <tspan font-weight="bold" font-size="10.5" letter-spacing="0">เทอดพงศ์ แปลงยศ</tspan></text>
<rect x="690.8" y="758.20" width="108.29" height="2.8" fill="#EC008C"/>
<line x1="799.09" y1="759.60" x2="808.09" y2="759.60" stroke="#bdbdbd" stroke-width="1"/>
<text x="809.09" y="763.80" fill="#EC008C" font-size="12">383.67</text>
<text x="680" y="768.00" text-anchor="end" fill="#333" font-size="11.5" letter-spacing="0.4">15) : ToRkoong 3️⃣3️⃣3️⃣🧡💵</text>
<text x="690.80" y="787" text-anchor="middle" fill="#333" font-size="11.5">0</text>
<text x="747.25" y="787" text-anchor="middle" fill="#333" font-size="11.5">200</text>
<text x="803.70" y="787" text-anchor="middle" fill="#333" font-size="11.5">400</text>
<text x="860.15" y="787" text-anchor="middle" fill="#333" font-size="11.5">600</text>
<text x="916.60" y="787" text-anchor="middle" fill="#333" font-size="11.5">800</text>
<text x="973.05" y="787" text-anchor="middle" fill="#333" font-size="11.5">1K</text>
<text x="1029.50" y="787" text-anchor="middle" fill="#333" font-size="11.5">1.2K</text>
<rect x="690" y="367" width="23.5" height="11" fill="#EC008C"/><text x="718" y="377" font-size="11.3" fill="#222">ภาคีคาปิบาร่า</text>
<rect x="801" y="367" width="23" height="11" fill="#0072F0"/><text x="829" y="377" font-size="12.5" letter-spacing="0.3" fill="#444">ThunderSpeed</text>
<rect x="934" y="367" width="23" height="11" fill="#7CC26A"/><text x="962" y="377" font-size="11.3" fill="#222">ภาคีสลอธซิ่ง</text>
</svg>
<div id="foot">วันที่อัปเดตข้อมูลล่าสุด: 16/5/2568 14:22:36<span style="display:inline-block;width:1px;height:11px;background:#ccc;margin:0 5px 0 4px;vertical-align:-2px"></span><u style="color:#333">นโยบายความเป็นส่วนตัว</u></div>
<div id="strip"></div>
</body></html>
